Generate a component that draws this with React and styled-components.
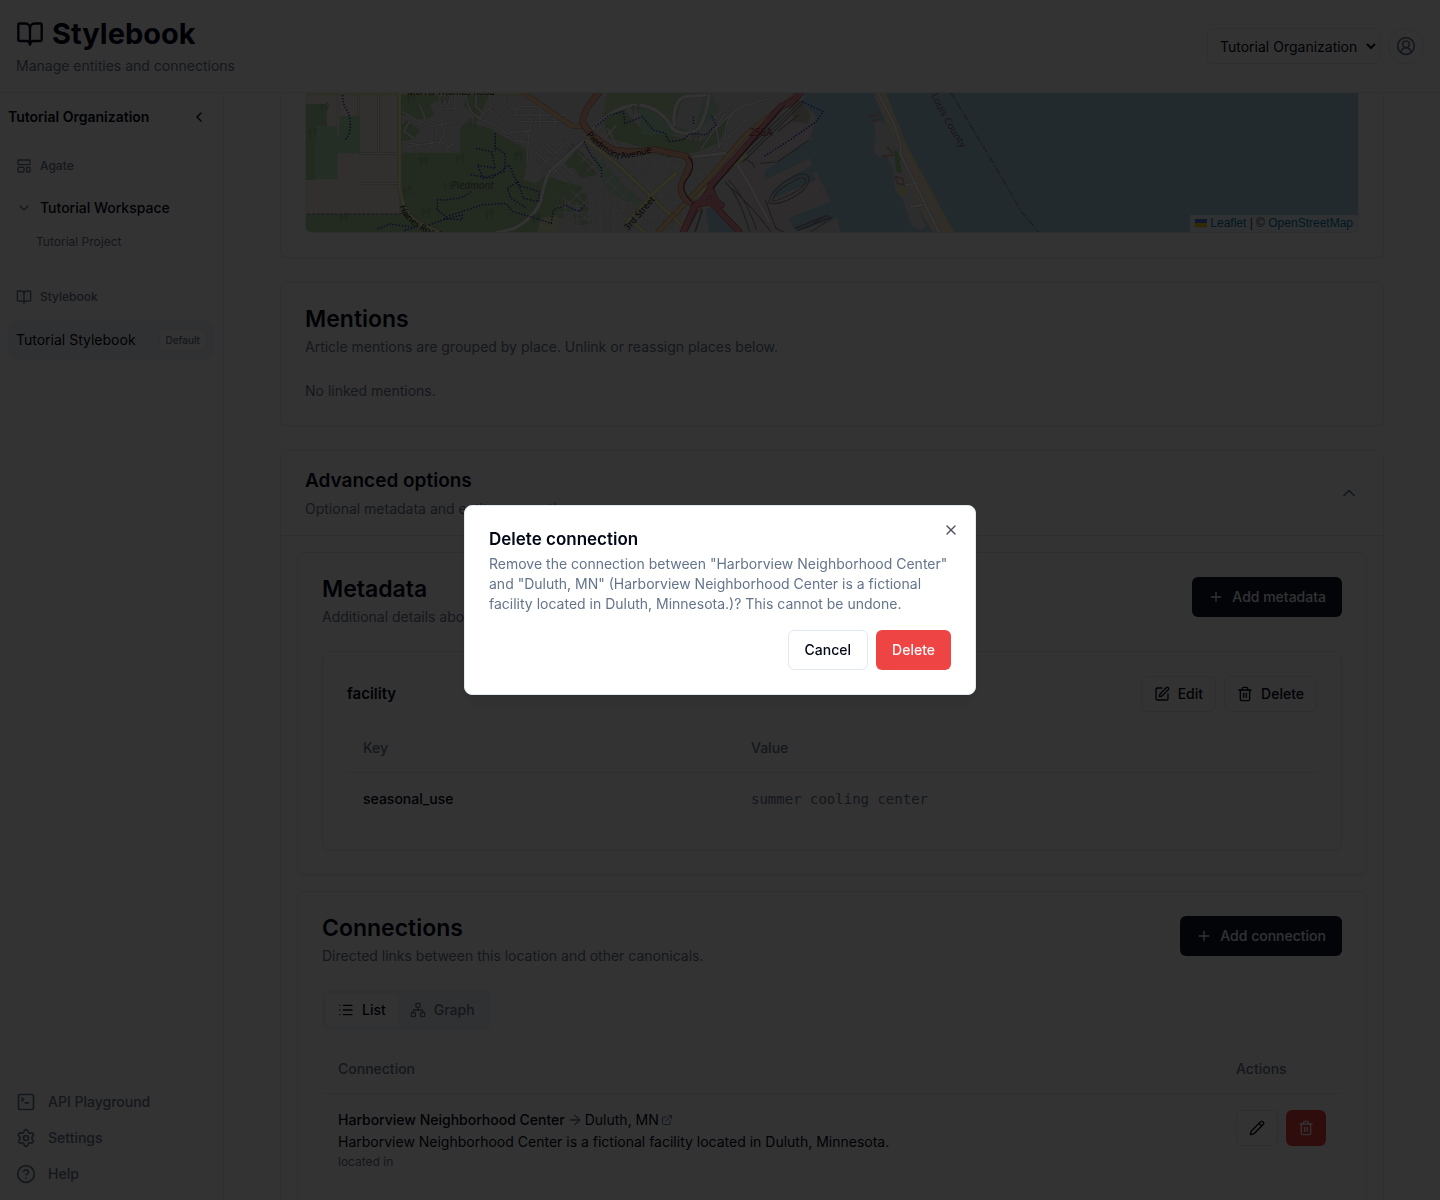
import React from "react";
import styled, { ThemeProvider, createGlobalStyle, css } from "styled-components";
import {
  ArrowRight,
  BookOpen,
  ChevronDown,
  ChevronLeft,
  ChevronUp,
  CircleHelp,
  CircleUserRound,
  ExternalLink,
  LayoutTemplate,
  List,
  Network,
  Pencil,
  Plus,
  Settings,
  SquarePen,
  SquareTerminal,
  X,
} from "lucide-react";

const theme = {
  background: "#ffffff",
  foreground: "#020817",
  muted: "#f1f5f9",
  mutedText: "#64748b",
  border: "#e2e8f0",
  primary: "#0f172a",
  primaryText: "#f8fafc",
  danger: "#ef4444",
};

const App = () => (
  <ThemeProvider theme={theme}>
    <GlobalStyle />
    <Page>
      <Header />
      <Body>
        <Sidebar />
        <Main>
          <MapCard>
            <MapFrame>
              <DuluthMap />
              <Attribution>
                <Flag viewBox="0 0 12 8" aria-hidden="true">
                  <path fill="#4C7BE1" d="M0 0h12v4H0z" />
                  <path fill="#FFD500" d="M0 4h12v3H0z" />
                  <path fill="#E0BC00" d="M0 7h12v1H0z" />
                </Flag>{" "}
                <a href="#leaflet">Leaflet</a> | © <a href="#osm">OpenStreetMap</a>
              </Attribution>
            </MapFrame>
          </MapCard>
          <Card>
            <CardHeader>
              <div>
                <CardTitle>Mentions</CardTitle>
                <Description>
                  Article mentions are grouped by place. Unlink or reassign places below.
                </Description>
              </div>
            </CardHeader>
            <Muted>No linked mentions.</Muted>
          </Card>
          <AdvancedOptions />
        </Main>
      </Body>
    </Page>
    <Overlay>
      <DeleteDialog />
    </Overlay>
  </ThemeProvider>
);

const Header = () => (
  <TopBar>
    <div>
      <Brand>
        <BookOpen size={28} />
        Stylebook
      </Brand>
      <Tagline>Manage entities and connections</Tagline>
    </div>
    <Account>
      <OrgSelect aria-label="Organization" defaultValue="tutorial">
        <option value="tutorial">Tutorial Organization</option>
      </OrgSelect>
      <Avatar type="button" aria-label="Account">
        <CircleUserRound size={20} />
      </Avatar>
    </Account>
  </TopBar>
);

const Sidebar = () => (
  <Side>
    <SideHeader>
      <SideTitle>Tutorial Organization</SideTitle>
      <CollapseButton type="button" aria-label="Collapse sidebar">
        <ChevronLeft size={16} />
      </CollapseButton>
    </SideHeader>
    <SideNav>
      <SectionLabel>
        <LayoutTemplate size={16} />
        Agate
      </SectionLabel>
      <WorkspaceButton type="button">
        <ChevronDown size={16} />
        Tutorial Workspace
      </WorkspaceButton>
      <ProjectLink href="#project">Tutorial Project</ProjectLink>
      <Divider />
      <SectionLabel>
        <BookOpen size={16} />
        Stylebook
      </SectionLabel>
      <StylebookLink href="#stylebook">
        Tutorial Stylebook
        <Badge>Default</Badge>
      </StylebookLink>
    </SideNav>
    <SideFooter>
      <FooterLink href="#api">
        <SquareTerminal size={20} />
        API Playground
      </FooterLink>
      <FooterLink href="#settings">
        <Settings size={20} />
        Settings
      </FooterLink>
      <FooterLink href="#help">
        <CircleHelp size={20} />
        Help
      </FooterLink>
    </SideFooter>
  </Side>
);

const AdvancedOptions = () => (
  <Panel>
    <PanelToggle type="button" aria-expanded="true">
      <span>
        <PanelTitle>Advanced options</PanelTitle>
        <PanelHint>Optional metadata and entity connections.</PanelHint>
      </span>
      <ChevronUp size={20} />
    </PanelToggle>
    <PanelBody>
      <Card>
        <CardHeader>
          <div>
            <CardTitle>Metadata</CardTitle>
            <Description>Additional details about this location.</Description>
          </div>
          <Button type="button" $variant="primary">
            <Plus size={16} />
            Add metadata
          </Button>
        </CardHeader>
        <Card>
          <EntryHeader>
            <EntryTitle>facility</EntryTitle>
            <Actions>
              <Button type="button" $small>
                <SquarePen size={16} />
                Edit
              </Button>
              <Button type="button" $small>
                <TrashIcon />
                Delete
              </Button>
            </Actions>
          </EntryHeader>
          <Table>
            <thead>
              <tr>
                <Th $width="40%">Key</Th>
                <Th>Value</Th>
              </tr>
            </thead>
            <tbody>
              <tr>
                <KeyCell>seasonal_use</KeyCell>
                <ValueCell>summer cooling center</ValueCell>
              </tr>
            </tbody>
          </Table>
        </Card>
      </Card>
      <Card>
        <CardHeader>
          <div>
            <CardTitle>Connections</CardTitle>
            <Description>Directed links between this location and other canonicals.</Description>
          </div>
          <Button type="button" $variant="primary">
            <Plus size={16} />
            Add connection
          </Button>
        </CardHeader>
        <Tabs role="tablist">
          <Tab type="button" role="tab" aria-selected="true" $active>
            <List size={16} />
            List
          </Tab>
          <Tab type="button" role="tab" aria-selected="false">
            <Network size={16} />
            Graph
          </Tab>
        </Tabs>
        <Table>
          <thead>
            <tr>
              <Th>Connection</Th>
              <Th $width="122px">Actions</Th>
            </tr>
          </thead>
          <tbody>
            <tr>
              <Td>
                <Connection>
                  <ConnectionEnds>
                    <b>Harborview Neighborhood Center</b>
                    <ArrowRight size={16} />
                    <a href="#duluth">
                      Duluth, MN
                      <ExternalLink size={12} />
                    </a>
                  </ConnectionEnds>
                  <span>
                    Harborview Neighborhood Center is a fictional facility located in Duluth,
                    Minnesota.
                  </span>
                  <Relation>located in</Relation>
                </Connection>
              </Td>
              <Td>
                <Actions>
                  <Button type="button" $small aria-label="Edit connection">
                    <Pencil size={16} />
                  </Button>
                  <Button type="button" $small $variant="danger" aria-label="Delete connection">
                    <TrashIcon />
                  </Button>
                </Actions>
              </Td>
            </tr>
          </tbody>
        </Table>
      </Card>
    </PanelBody>
  </Panel>
);

const DeleteDialog = () => (
  <Dialog role="dialog" aria-modal="true" aria-labelledby="dialog-title">
    <DialogTitle id="dialog-title">Delete connection</DialogTitle>
    <Muted>
      Remove the connection between "Harborview Neighborhood Center" and "Duluth, MN" (Harborview
      Neighborhood Center is a fictional facility located in Duluth, Minnesota.)? This cannot be
      undone.
    </Muted>
    <DialogFooter>
      <Button type="button">Cancel</Button>
      <Button type="button" $variant="danger">
        Delete
      </Button>
    </DialogFooter>
    <CloseButton type="button" aria-label="Close">
      <X size={16} />
    </CloseButton>
  </Dialog>
);

const TrashIcon = () => (
  <svg
    width="16"
    height="16"
    viewBox="0 0 24 24"
    fill="none"
    stroke="currentColor"
    strokeWidth="2"
    strokeLinecap="round"
    strokeLinejoin="round"
    aria-hidden="true"
  >
    <path d="M3 6h18" />
    <path d="M19 6v14c0 1-1 2-2 2H7c-1 0-2-1-2-2V6" />
    <path d="M8 6V4c0-1 1-2 2-2h4c1 0 2 1 2 2v2" />
    <path d="M10 11v6" />
    <path d="M14 11v6" />
  </svg>
);

// a casing line with a lighter line on top of it
const Road = ({ d, color = "#ffffff", casing = "#bbb8b8", width = 8 }) => (
  <g fill="none" strokeLinejoin="round" strokeLinecap="round">
    <path d={d} stroke={casing} strokeWidth={width + 3} />
    <path d={d} stroke={color} strokeWidth={width} />
  </g>
);

const TREES = [
  [345, 45], [440, 48], [520, 115], [985, 75], [1155, 160], [380, 232], [483, 225], [650, 217],
  [448, 307], [333, 320], [387, 386], [568, 390], [700, 402], [152, 400], [64, 147], [98, 70],
];

const DuluthMap = () => (
  <MapSvg viewBox="306 93 1052 139" preserveAspectRatio="xMidYMid slice">
    <title>Map of Duluth</title>
    <defs>
      <pattern id="downtown" width="31" height="31" patternUnits="userSpaceOnUse" patternTransform="rotate(45 830 130)">
        <path d="M0 3h31M3 0v31" stroke="#bbb8b8" strokeWidth="6" />
        <path d="M0 3h31M3 0v31" stroke="#ffffff" strokeWidth="3" />
      </pattern>
      <pattern id="blocks" width="34" height="20" patternUnits="userSpaceOnUse">
        <path d="M0 3h34M3 0v20" stroke="#bbb8b8" strokeWidth="5" />
        <path d="M0 3h34M3 0v20" stroke="#ffffff" strokeWidth="3" />
      </pattern>
      <path id="piedmont-ave" d="M586 135 Q600 151 618 159 Q637 158 665 148" />
      <path id="county" d="M926 84 Q942 122 974 168" />
      <path id="haines" d="M400 206 Q402 226 445 240" />
      <path id="third" d="M628 231 L662 192" />
    </defs>
    <rect x="306" y="93" width="1052" height="139" fill="#aad3df" />
    <g transform="translate(290 85) scale(.3508 .3333)">
      <path fill="#e0dfdf" d="M0 0H1530L1470 30 1455 50 1500 95 1480 170 1355 255 1350 275 1480 215 1485 240 1375 310 1500 265 1540 350 1420 400 1440 440 1560 400 1570 450H0Z" />
      <path fill="#f2efe9" d="M40 20h270v365H40z" />
      <path fill="#add19e" d="M40 57h65v66H73v162H40zM45 388h270l40 60H45z" />
      <path fill="#b5e3b5" d="M142 93h58v112h-65v78H73V124h69z" />
      {/* woods around Piedmont */}
      <path fill="#add19e" d="M318 20h100l8 25-25 15 10 30-30 15-63-15zM330 105l40 30-15 25-37 10v-50zM500 110l70 20 40 25 60 35 5 50-10 45 35 10 30-25 50 20 60 15-15 35 20 15-90 60-30 40-105 65H380l-60-75V203h165V130zM505 24h65l-30 70-45-30z" />
      <path fill="#add19e" d="M800 170l60 60 15 40-45 10-20-30-30-5zM890 85l50-25 60 70 80 20 90 20 50-50 30-20-25 70-60 30-90 20-60-30-110-30zM790 320l55 5 15 90-45 10z" />
      <path fill="#c1dcae" d="M905 24l260 0-45 15-25 90-60-45-60-25-80 25z" />
      <path fill="#b5e3c0" d="M1000 60l90 60 60 20 30-100 20-15 25 50-70 75H1000zM860 195l35 30 60 80 50 40-20 25-80-55-30-60z" />
      <path fill="#e6e8b8" d="M715 400l50-10v50h-60z" />
      <path fill="url(#downtown)" d="M835 175l110 30 70-10 100 25 90 30 60-60-100 200-60 60H850l-90-105 60-40 30-40-30-60zM700 200l80-50 40 40-80 80-50-25z" />
      <path fill="url(#blocks)" d="M765 350h140l60 50 10 40H765z" />
      <path fill="url(#blocks)" d="M650 60h150v45l-50 25h-90z" />
      <path fill="#e6dbe2" d="M1290 235l80-60 70-80 40 10 5 60-130 85-5 20 130-50 5 20-110 65 125-45 40 85-120 50 20 45h-90l-90-130-20-45z" />
      <path fill="#aad3df" d="M1185 370l25-5 70 80h-85z" />
      <path fill="#c9c0b5" d="M1425 60l30-15 30 45-10 25-40-5z" />
      {/* dock slips */}
      <path fill="#aad3df" d="M1350 268l130-62v14l-125 65zM1375 315l115-50 10 20-120 55zM1430 400l90-35 10 12-90 45zM1460 25l50 45 20-45z" />
      <g fill="none" stroke="#8d8790" strokeWidth="3">
        <path d="M1365 350q5-40 80-80 30-10 35 10 0 35-60 65-50 20-55 5zM1375 347q5-30 70-65 25-10 25 5 0 20-50 45-40 20-45 15z" />
        <path d="M1450 45L1280 215M1458 48L1285 225M1466 50L1290 232M1275 215q45 10 50 35M1240 290q40 40 70 150M1250 285q50 55 80 150M1260 310q70 70 110 130" />
        <path d="M1340 235l50-5 90-65M1355 345l30 85 30 15M1470 430l60-40 15 10-60 40M1390 140l60-50" />
        <path d="M1440 430l90-38M1448 436l90-38M1165 370l-35 70M1175 375l-20 65" strokeWidth="5" />
      </g>
      <Road width={4} d="M137 24v135M196 24v65M252 24v180M200 206h108M200 296h108" />
      <Road width={4} d="M320 80l40 25 45 20 60-15 20 20M405 130v65M340 110l-15 30 30 20M320 170l50 10 60-10 35 25M370 60l15 40-20 20M430 105l10 40-15 30M470 30v70M440 70h30M325 190l30-10 20 10M440 190l30-15" />
      <Road width={4} d="M500 24q5 60 45 80 40 10 70 40l60 25M570 24v50l30 30M540 100l30-30M640 90h150M650 110h150M712 40v95M640 90q0-30 35-25h60M755 60v75M530 24v40l20 20M610 24v30l30 20" />
      <Road width={4} d="M690 100l-10 60-5 80M835 175l-90 95M810 150l-110 110M700 200l90 90M720 180l90 90M890 120l-40 50M1190 215l110-110M1170 195l70-110M1240 160q0-80 60-100l70-20M1210 100l80-75M1225 190l-10-60 60-60M905 130l30 60M930 120l-50 60M620 145l70-10M640 165l50 10" />
      <Road width={9} color="#fff" d="M865 130q60-70 130-70 60 5 95 70 35 30 75 0 20-30 30-100M1095 120q-5-70 30-85l60-5M840 165l-100 95q-15 30-25 85-15 50-75 85l-55 15M1150 215l90-10M1255 205l50 85 60 120" />
      <Road width={9} color="#f7fabf" casing="#b9bb77" d="M45 24h620M312 24v280q10 90 65 115l50 25M845 165l90 75 90 90 90 90M1025 335l75-70M960 410l70-75M980 415l30 25M1150 340l150-130" />
      <Road width={12} color="#fcd6a4" casing="#c09050" d="M665 24l140 100 25 0M1450 24l-150 125-105 130-145 160" />
      <Road width={16} color="#f9b29c" casing="#b06950" d="M880 24q-50 60-45 90 20 40 85 80 70 10 120 0l65 15q35 0 35 30l-20 50q-15 30 10 55l35 25" />
      <Road width={16} color="#e892a2" casing="#a5405a" d="M1455 24q-20 30-55 40l-200 240q-20 50-45 55l-35 85M1155 360l45-10 80 90M1200 300q5 50 30 60" />
      <path d="M1410 60L1205 310M1135 215q30 30-10 75-10 25 15 55l10 12" fill="none" stroke="#5b4650" strokeWidth="3" />
      <g fill="none" stroke="#2b2bd0" strokeWidth="4" strokeDasharray="4 5">
        <path d="M150 30q0 30 15 50 10 25 5 60-5 20-15 25M585 145v55M530 190l45 10 10 50-50-10 15 40 60-20 5-50-30-25M515 270l60 10 50-40 25 60 60 20v30l-45-10-15-50-30 20 10 30 45 30" />
        <path d="M515 320q-20 25-95 25v30l25 20q60-20 100-35l70-5 20 25 50 15 60 20 5-40 35-15 40 20 15-20M395 420l40-15 55-15v15l-55-5M250 432l35-15 70 10-30 10" />
        <path d="M870 125l40-35 40-10 5 35 50-20 30 40 35 10 10 25 40-5 20-20 45 5 30-30-15-30M838 170l20 40 30 40v25M1150 95v25M1460 50l60 30-20 30-90 65-60 40" />
      </g>
      <path d="M50 387h268" stroke="#8a6590" strokeWidth="3" strokeDasharray="8 5" />
      <g fill="none" stroke="#7fa573" strokeWidth="2">
        {TREES.map(([x, y]) => (
          <path key={`${x}-${y}`} d={`M${x - 6} ${y + 12}v-12l-5-4 5-10 5 10-5 4M${x + 8} ${y + 8}v-12l-5-4 5-10 5 10-5 4`} />
        ))}
      </g>
    </g>
    <g transform="translate(840 85) scale(.3571 .3333)">
      <path fill="#f2e6cf" d="M92 20h35l60 165 60 120 75 140h-60l-38-70-36-80-15-70z" />
      <path fill="#e0dfdf" d="M95 115l20-5 25 20 25 60 20 80 20 60 35 95-15 10-25-15-25-80-22-30-5-60-20-40-15 10-18-20 5-60z" />
      <path fill="none" stroke="#fbe5a0" strokeWidth="5" d="M120 20l65 165 65 125 65 132" />
      <path fill="#e8e4a0" d="M160 305l25 5 3 20h-25z" />
      <path fill="#9ccf90" d="M150 195l15 5 8 65-15-5z" />
      <path fill="none" stroke="#e0a59a" strokeWidth="5" d="M132 185l15 20M115 215l35-5M82 95l25-5M88 110l25-8M155 275l20 5 5 20-20-5z" />
      <Road width={7} d="M104 20l45 90 22 70-3 25 40 85 70 155M185 300l30-5M200 365l30-5" />
      <path fill="none" stroke="#9a85a0" strokeWidth="4" strokeDasharray="22 5 5 5" d="M310 22l90 160 80 145 25 50 55 68" />
    </g>
    <MapText>
      <text x="407" y="95">Morris Thomas Road</text>
      <text>
        <textPath href="#piedmont-ave">Piedmont Avenue</textPath>
      </text>
      <text>
        <textPath href="#haines">Haines Road</textPath>
      </text>
      <text>
        <textPath href="#third">3rd Street</textPath>
      </text>
    </MapText>
    <MapArea x="451" y="189">Piedmont</MapArea>
    <MapRef x="749" y="136">256A</MapRef>
    <MapCounty>
      <textPath href="#county">nt Louis County</textPath>
    </MapCounty>
  </MapSvg>
);

const GlobalStyle = createGlobalStyle`
  *, *::before, *::after {
    box-sizing: border-box;
  }
  body {
    margin: 0;
    background: #ffffff;
    color: #020817;
    font-family: Inter, "Liberation Sans", sans-serif;
    font-size: 14px;
    line-height: 20px;
  }
  h1, h2, h3, p {
    margin: 0;
  }
  a {
    color: inherit;
    text-decoration: none;
  }
  button, select {
    font: inherit;
    color: inherit;
    cursor: pointer;
  }
  svg {
    flex-shrink: 0;
  }
`;

const Page = styled.div`
  display: flex;
  flex-direction: column;
  height: 100vh;
  overflow: hidden;
`;
const TopBar = styled.header`
  display: flex;
  align-items: center;
  justify-content: space-between;
  padding: 16px;
  border-bottom: 1px solid ${props => props.theme.border};
`;
const Brand = styled.h1`
  display: flex;
  align-items: center;
  gap: 8px;
  font-size: 29px;
  font-weight: 700;
  line-height: 36px;
`;
const Muted = styled.p`
  color: ${props => props.theme.mutedText};
`;
const Tagline = styled(Muted)`
  margin-top: 4px;
`;
const Description = styled(Muted)`
  margin-top: 6px;
`;
const Account = styled.div`
  display: flex;
  align-items: center;
  gap: 8px;
`;
const OrgSelect = styled.select`
  width: 173px;
  height: 36px;
  padding: 0 0 0 8px;
  border: 1px solid ${props => props.theme.border};
  border-radius: 6px;
  background: ${props => props.theme.background};
`;
const Avatar = styled.button`
  display: flex;
  align-items: center;
  justify-content: center;
  width: 36px;
  height: 36px;
  padding: 0;
  border: 1px solid ${props => props.theme.border};
  border-radius: 50%;
  background: none;
  color: ${props => props.theme.mutedText};
`;

const Body = styled.div`
  display: flex;
  flex: 1;
  min-height: 0;
`;
const Side = styled.aside`
  display: flex;
  flex-direction: column;
  flex: 0 0 224px;
  border-right: 1px solid ${props => props.theme.border};
`;
const SideHeader = styled.div`
  display: flex;
  align-items: center;
  justify-content: space-between;
  padding: 8px;
  border-bottom: 1px solid ${props => props.theme.muted};
`;
const SideTitle = styled.h2`
  font-size: 14px;
  font-weight: 600;
  line-height: 20px;
`;
const CollapseButton = styled.button`
  display: flex;
  align-items: center;
  justify-content: center;
  width: 32px;
  height: 32px;
  padding: 0;
  border: 0;
  background: none;
`;
const SideNav = styled.nav`
  display: flex;
  flex-direction: column;
  flex: 1;
  padding: 8px;
`;
const SectionLabel = styled.div`
  display: flex;
  align-items: center;
  gap: 8px;
  height: 32px;
  margin-bottom: 8px;
  padding: 0 8px;
  color: ${props => props.theme.mutedText};
  font-size: 12px;
  font-weight: 500;
`;
const WorkspaceButton = styled.button`
  display: flex;
  align-items: center;
  gap: 8px;
  height: 36px;
  padding: 0 8px;
  border: 0;
  background: none;
  font-weight: 500;

  svg {
    color: ${props => props.theme.mutedText};
  }
`;
const ProjectLink = styled.a`
  margin-top: 2px;
  padding: 6px 8px 6px 28px;
  color: ${props => props.theme.mutedText};
  font-size: 12px;
  line-height: 16px;
`;
const Divider = styled.hr`
  width: 100%;
  margin: 12px 0;
  border: 0;
  border-top: 1px solid ${props => props.theme.muted};
`;
const StylebookLink = styled.a`
  display: flex;
  align-items: center;
  justify-content: space-between;
  height: 38px;
  padding: 0 8px;
  border-radius: 6px;
  background: ${props => props.theme.muted};
`;
const Badge = styled.span`
  padding: 2px 6px;
  border: 1px solid ${props => props.theme.border};
  border-radius: 4px;
  background: ${props => props.theme.background};
  color: ${props => props.theme.mutedText};
  font-size: 10px;
  font-weight: 500;
  line-height: 16px;
`;
const SideFooter = styled.div`
  margin: 0 8px;
  padding: 8px 0;
  border-top: 1px solid ${props => props.theme.muted};
`;
const FooterLink = styled.a`
  display: flex;
  align-items: center;
  gap: 12px;
  height: 36px;
  padding: 0 8px;
  color: ${props => props.theme.mutedText};
  font-weight: 500;
`;

const Main = styled.main`
  display: flex;
  flex-direction: column;
  flex: 1;
  gap: 24px;
  min-width: 0;
  padding: 0 56px;
  overflow: hidden;

  > * {
    flex-shrink: 0;
  }
`;
const Card = styled.section`
  padding: 24px;
  border: 1px solid ${props => props.theme.border};
  border-radius: 8px;
  background: ${props => props.theme.background};
  box-shadow: 0 1px 2px rgba(0, 0, 0, 0.05);
`;
const MapCard = styled(Card)`
  padding-top: 0;
  border-top: 0;
  border-radius: 0 0 8px 8px;
`;
const MapFrame = styled.div`
  position: relative;
  overflow: hidden;
  border: 1px solid ${props => props.theme.border};
  border-top: 0;
  border-radius: 0 0 6px 6px;
`;
const MapSvg = styled.svg`
  display: block;
  width: 100%;
  height: 139px;
`;
const MapText = styled.g`
  fill: #222222;
  font-family: "Noto Sans", sans-serif;
  font-size: 9px;
`;
const MapArea = styled.text`
  fill: #6b7565;
  font-family: "Noto Sans", sans-serif;
  font-size: 10px;
  font-style: italic;
`;
const MapRef = styled.text`
  fill: #a5404a;
  font-family: "Noto Sans", sans-serif;
  font-size: 10px;
`;
const MapCounty = styled.text`
  fill: #8d618b;
  font-family: "Noto Sans", sans-serif;
  font-size: 10px;
`;
const Attribution = styled.div`
  position: absolute;
  right: 0;
  bottom: 0;
  padding: 0 5px;
  background: rgba(255, 255, 255, 0.8);
  color: #333333;
  font-family: "Liberation Sans", sans-serif;
  font-size: 12px;
  line-height: 17px;

  a {
    color: #0078a8;
  }
`;
const Flag = styled.svg`
  width: 12px;
  height: 8px;
`;
const CardHeader = styled.div`
  display: flex;
  align-items: flex-start;
  justify-content: space-between;
  margin-bottom: 24px;
`;
const CardTitle = styled.h2`
  font-size: 23px;
  font-weight: 600;
  line-height: 24px;
`;

const Panel = styled.section`
  border: 1px solid ${props => props.theme.border};
  border-radius: 8px;
`;
const PanelToggle = styled.button`
  display: flex;
  align-items: center;
  justify-content: space-between;
  width: 100%;
  padding: 16px 24px;
  border: 0;
  border-bottom: 1px solid ${props => props.theme.border};
  background: none;
  text-align: left;

  svg {
    color: ${props => props.theme.mutedText};
  }
`;
const PanelTitle = styled.span`
  display: block;
  font-size: 19px;
  font-weight: 600;
  line-height: 28px;
`;
const PanelHint = styled.span`
  display: block;
  margin-top: 4px;
  color: ${props => props.theme.mutedText};
`;
const PanelBody = styled.div`
  display: flex;
  flex-direction: column;
  gap: 16px;
  padding: 16px;
`;

const variants = {
  primary: css`
    border: 0;
    background: ${props => props.theme.primary};
    color: ${props => props.theme.primaryText};
  `,
  danger: css`
    border: 0;
    background: ${props => props.theme.danger};
    color: ${props => props.theme.primaryText};
  `,
};
const Button = styled.button`
  display: inline-flex;
  align-items: center;
  justify-content: center;
  gap: 8px;
  height: ${props => (props.$small ? 36 : 40)}px;
  padding: 0 ${props => (props.$small ? 12 : 16)}px;
  border: 1px solid ${props => props.theme.border};
  border-radius: 6px;
  background: ${props => props.theme.background};
  font-weight: 500;
  ${props => variants[props.$variant]}
`;
const Actions = styled.div`
  display: flex;
  gap: 8px;
`;
const EntryHeader = styled.div`
  display: flex;
  align-items: center;
  justify-content: space-between;
  margin-bottom: 12px;
`;
const EntryTitle = styled.h3`
  font-size: 15px;
  font-weight: 600;
  line-height: 24px;
`;
const Table = styled.table`
  width: 100%;
  border-spacing: 0;
  table-layout: fixed;
`;
const Th = styled.th`
  width: ${props => props.$width || "auto"};
  height: 49px;
  padding: 0 16px;
  border-bottom: 1px solid ${props => props.theme.border};
  color: ${props => props.theme.mutedText};
  font-weight: 500;
  text-align: left;
`;
const Td = styled.td`
  padding: 16px;
  vertical-align: top;
`;
const KeyCell = styled(Td)`
  font-weight: 500;
`;
const ValueCell = styled(Td)`
  color: ${props => props.theme.mutedText};
  font-family: "DejaVu Sans Mono", monospace;
`;
const Tabs = styled.div`
  display: flex;
  width: fit-content;
  margin-bottom: 15px;
  padding: 4px;
  border-radius: 6px;
  background: ${props => props.theme.muted};
`;
const Tab = styled.button`
  display: flex;
  align-items: center;
  gap: 8px;
  height: 32px;
  padding: 0 12px;
  border: 0;
  border-radius: 4px;
  background: ${props => (props.$active ? props.theme.background : "none")};
  color: ${props => (props.$active ? props.theme.foreground : props.theme.mutedText)};
  font-weight: 500;
`;
const Connection = styled.div`
  display: flex;
  flex-direction: column;
  gap: 2px;
`;
const ConnectionEnds = styled.div`
  display: flex;
  align-items: center;
  gap: 2px;

  b {
    font-weight: 500;
  }
  a {
    display: flex;
    align-items: center;
    gap: 2px;
  }
  svg {
    color: ${props => props.theme.mutedText};
  }
`;
const Relation = styled.span`
  color: ${props => props.theme.mutedText};
  font-size: 12px;
  line-height: 16px;
`;

const Overlay = styled.div`
  position: fixed;
  inset: 0;
  display: flex;
  align-items: center;
  justify-content: center;
  background: rgba(0, 0, 0, 0.8);
`;
const Dialog = styled.div`
  position: relative;
  width: 100%;
  max-width: 512px;
  padding: 24px;
  border: 1px solid ${props => props.theme.border};
  border-radius: 8px;
  background: ${props => props.theme.background};
  box-shadow: 0 10px 15px -3px rgba(0, 0, 0, 0.1), 0 4px 6px -4px rgba(0, 0, 0, 0.1);
`;
const DialogTitle = styled.h2`
  margin-bottom: 6px;
  font-size: 17px;
  font-weight: 600;
  line-height: 18px;
`;
const DialogFooter = styled.div`
  display: flex;
  justify-content: flex-end;
  gap: 8px;
  margin-top: 16px;
`;
const CloseButton = styled.button`
  position: absolute;
  top: 16px;
  right: 16px;
  display: flex;
  padding: 0;
  border: 0;
  background: none;
  opacity: 0.7;
`;

export default App;
